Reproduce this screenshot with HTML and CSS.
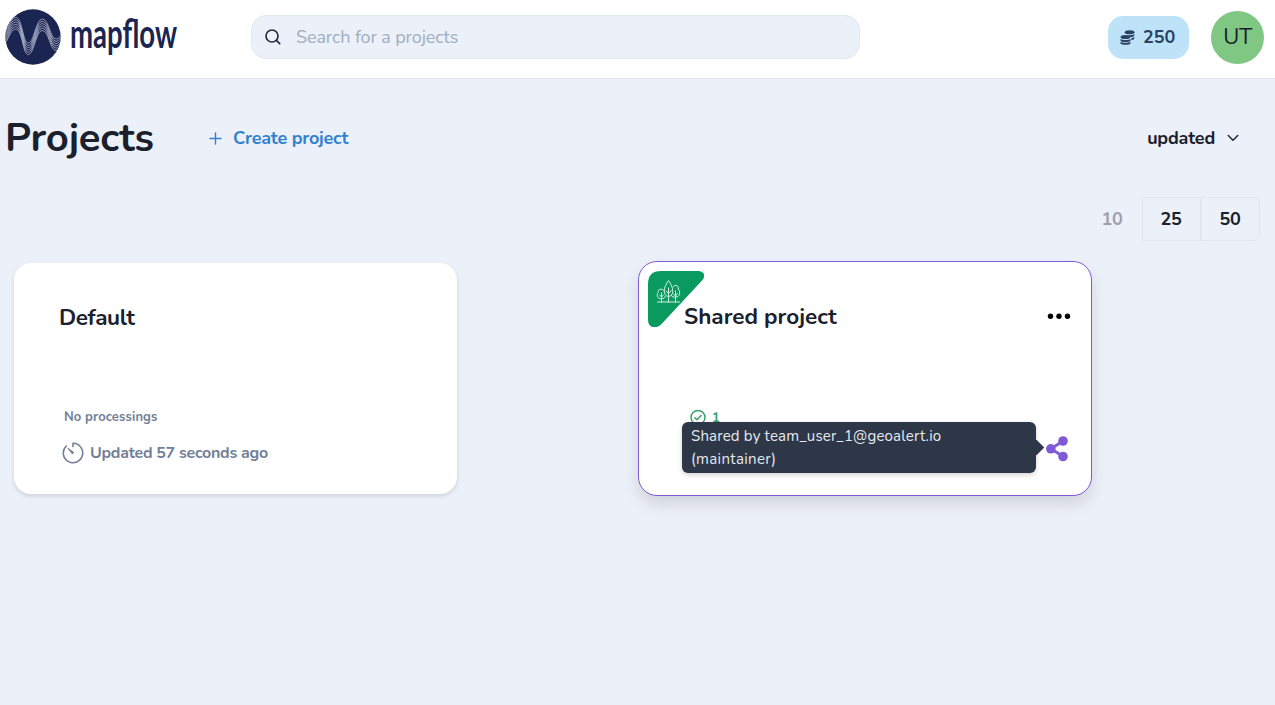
FILE: index.html
```html
<!DOCTYPE html>
<html lang="en">
<head>
<meta charset="utf-8">
<title>Mapflow – Projects</title>
<link rel="stylesheet" href="styles.css">
</head>
<body>
<header class="header">
  <a class="brand">
    <svg class="brand-mark" viewBox="0 0 56 56">
      <defs>
        <clipPath id="disc"><circle cx="28" cy="28" r="27.7"/></clipPath>
        <path id="wave" d="M-2 25C3 22 5 8.500 10.700 8.500C17.500 8.500 17.500 34 23.300 34C29 34 31 10 37.300 10C44 10 45 30 51 30C54 30 55.500 27 58 22"/>
      </defs>
      <circle cx="28" cy="28" r="27.7" fill="#1a2551"/>
      <g clip-path="url(#disc)" fill="none" stroke="#c5c9dc" stroke-width=".7">
        <use href="#wave" y="0"/><use href="#wave" y="2.300"/><use href="#wave" y="4.600"/><use href="#wave" y="6.900"/><use href="#wave" y="9.200"/><use href="#wave" y="11.500"/>
      </g>
    </svg>
    <svg class="brand-name" viewBox="0 0 110 56"><text x="0" y="38.500" textLength="107" lengthAdjust="spacingAndGlyphs">mapflow</text></svg>
  </a>
  <label class="search">
    <svg viewBox="0 0 18 18" fill="none" stroke="#252c3c" stroke-width="1.7" stroke-linecap="round"><circle cx="8" cy="8" r="6"/><path d="M12.6 12.6L15.700 15.700"/></svg>
    <span class="search-text">Search for a projects</span>
  </label>
  <div class="credits">
    <svg viewBox="0 0 15 15" fill="#2a4365"><ellipse cx="9.6" cy="2.3" rx="4.9" ry="2"/><path d="M9.8 5.1c2 0 3.7-.4 4.5-1.2v1.5c0 .8-1.2 1.5-3 1.8-.4-.9-2-1.6-3.8-1.8zM11.4 8.2c1.200-.2 2.200-.6 2.900-1.100v1.400c0 .8-1.200 1.500-2.900 1.800z"/><ellipse cx="5.500" cy="7.100" rx="5" ry="2"/><path d="M.5 8.900c2 1.400 8 1.400 10 0v1.700c0 2-10 2-10 0zM.5 11.700c2 1.400 8 1.400 10 0v1.500c0 2.200-10 2.200-10 0z"/></svg>
    <span class="credits-value">250</span>
  </div>
  <div class="avatar">UT</div>
</header>
<main class="page">
  <div class="toolbar">
    <h1 class="title">Projects</h1>
    <a class="create">
      <svg viewBox="0 0 14 14" stroke="#3182ce" stroke-width="1.5" stroke-linecap="round"><path d="M7 1v12M1 7h12"/></svg>
      <span class="create-text">Create project</span>
    </a>
    <div class="sort">
      <span class="sort-text">updated</span>
      <svg viewBox="0 0 12 8" fill="none" stroke="#252c3c" stroke-width="1.6" stroke-linecap="round" stroke-linejoin="round"><path d="M1.300 1.500L6 6.200L10.700 1.500"/></svg>
    </div>
  </div>
  <div class="sizes">
    <span class="size size-off">10</span><span class="size">25</span><span class="size size-last">50</span>
  </div>
  <div class="cards">
    <article class="card">
      <h2 class="name name-default">Default</h2>
      <p class="empty">No processings</p>
      <div class="updated">
        <svg viewBox="0 0 22 22" fill="none" stroke="#718096" stroke-width="1.600" stroke-linecap="round" stroke-linejoin="round"><path d="M11 4.600V1.300A9.700 9.700 0 1 1 4.300 4"/><path d="M6.300 6.500L11.800 10.500L10.600 11.700Z" fill="#718096" stroke-width="1"/></svg>
        <span class="updated-text">Updated 57 seconds ago</span>
      </div>
    </article>
    <article class="card card-shared">
      <svg class="ribbon" viewBox="0 0 56 56">
        <path d="M13 0H50C56 0 58 5 54.500 9L14 52.500C8 59 0 57 0 49V13Q0 0 13 0Z" fill="#089a5e"/>
        <g fill="none" stroke="#d5efe1" stroke-width="1" stroke-linecap="round"><path d="M9.500 31H31.500M20.500 31V17M20.500 25.500C14 25 15.500 16 20.500 9.500C25.500 16 27 25 20.500 25.500M17.800 20L20.500 22.500L23.200 19.500M13.500 31V22M11.500 24L13.500 26L15.300 24M27.500 31V20M25.500 23L27.500 25L29.500 22.500M15.500 19C11.500 16.500 9.500 19.500 10.300 21.500C7.500 24 10 28.500 13.500 27.500C15.500 28 17 27 17.300 25.200M25 16C27.500 12.500 31 15 30.300 18C33 21.500 31.500 26.500 27.500 26C25.500 26.500 24 26 23.400 24.500"/></g>
      </svg>
      <div class="card-head">
        <h2 class="name name-shared">Shared project</h2>
        <svg class="dots" viewBox="0 0 24 8"><circle cx="3.500" cy="3.200" r="2.700"/><circle cx="12" cy="3.200" r="2.700"/><circle cx="20.500" cy="3.200" r="2.700"/></svg>
      </div>
      <div class="done">
        <svg viewBox="0 0 16 16" fill="none" stroke="#38a169" stroke-width="1.500" stroke-linecap="round" stroke-linejoin="round"><circle cx="8" cy="7.500" r="7"/><path d="M4.800 7.900L7 9.800L11.200 5.500"/></svg>
        <span>1</span>
      </div>
      <svg class="share" viewBox="0 0 22 26" fill="#805ad5"><path d="M17 5L5 12.800L17 20.500" fill="none" stroke="#805ad5" stroke-width="2.800"/><circle cx="17" cy="5" r="4.800"/><circle cx="4.800" cy="12.800" r="4.800"/><circle cx="17" cy="20.500" r="4.800"/></svg>
      <div class="tooltip"><span class="tip-a">Shared by team_user_1@geoalert.io</span><br><span class="tip-b">(maintainer)</span></div>
    </article>
  </div>
</main>
</body>
</html>
```
FILE: styles.css
```css
* { box-sizing: border-box; }
body {
  margin: 0;
  height: 705px;
  overflow: hidden;
  background: #ecf0f8;
  color: #1a202c;
  font-family: Nunito, Lato, "Open Sans", sans-serif;
}
svg { display: block; flex: none; }
h1, h2, p { margin: 0; }
span, h1, h2, p { white-space: nowrap; }
.header {
  display: flex;
  align-items: flex-start;
  height: 79px;
  background: #fff;
  border-bottom: 1px solid #dfe4ec;
}
.brand { display: flex; width: 251px; padding: 9px 0 0 5px; gap: 9px; }
.brand-mark { width: 56px; height: 56px; }
.brand-name { width: 110px; height: 56px; overflow: visible; }
.brand-name text { font: 700 41px Lato, sans-serif; fill: #1a2551; }
.search {
  display: flex;
  align-items: center;
  gap: 14px;
  width: 609px;
  height: 44px;
  margin-top: 15px;
  padding-left: 12px;
  border: 1px solid #e2e8f0;
  border-radius: 15px;
  background: #ecf0f8;
  color: #a0aec0;
  font-size: 18px;
}
.search svg { width: 18px; height: 18px; }
.search-text { letter-spacing: -.12px; }
.credits {
  display: flex;
  align-items: center;
  gap: 8px;
  width: 81px;
  height: 43px;
  margin: 16px 22px 0 248px;
  padding: 0 0 1px 12px;
  border-radius: 15px;
  background: #bee3f8;
  color: #2a4365;
  font-size: 18px;
  font-weight: 700;
}
.credits svg { width: 15px; height: 15px; }
.avatar {
  width: 53px;
  height: 53px;
  margin-top: 11px;
  border-radius: 50%;
  background: #80c784;
  font-size: 22px;
  letter-spacing: -.5px;
  line-height: 53px;
  text-align: center;
}
.toolbar { display: flex; align-items: center; height: 118px; padding: 0 36px 0 5px; }
.title { width: 204px; font-size: 40px; line-height: 50px; font-weight: 700; letter-spacing: -.15px; }
.create { display: flex; align-items: center; gap: 11px; color: #3182ce; font-size: 18px; font-weight: 700; letter-spacing: -.22px; }
.create svg { width: 13px; height: 13px; }
.sort { display: flex; align-items: center; gap: 12px; margin-left: auto; font-size: 18px; font-weight: 700; letter-spacing: -.2px; }
.sort svg { width: 12px; height: 8px; }
.sizes { display: flex; justify-content: flex-end; padding-right: 15px; }
.size {
  width: 59px;
  height: 44px;
  padding-right: 1px;
  border: 1px solid #e2e8f0;
  font-size: 18px;
  font-weight: 700;
  line-height: 43px;
  letter-spacing: -.2px;
  text-align: center;
}
.size-off { color: #9ca1ad; border-color: transparent; }
.size-last { border-radius: 0 6px 6px 0; }
.cards { display: flex; align-items: flex-start; gap: 181px; padding: 20px 0 0 14px; }
.card {
  width: 443px;
  height: 231px;
  margin-top: 2px;
  padding: 41px 45px 0;
  border-radius: 17px;
  background: #fff;
  box-shadow: 0 2px 4px rgba(0, 0, 0, .13);
}
.name { font-size: 22.5px; line-height: 28px; font-weight: 700; }
.name-default { letter-spacing: -.4px; }
.empty { width: max-content; margin: 75px 0 0 5px; color: #718096; font-size: 13px; line-height: 20px; font-weight: 700; letter-spacing: .12px; }
.updated { display: flex; align-items: center; gap: 6px; margin: 15px 0 0 3px; color: #718096; font-size: 16px; font-weight: 700; letter-spacing: -.27px; }
.updated svg { width: 22px; height: 22px; }
.card-shared {
  position: relative;
  width: 454px;
  height: 235px;
  margin-top: 0;
  padding: 41px 20px 0 45px;
  border: 1px solid #805ad5;
  border-radius: 19px;
  box-shadow: 0 8px 15px rgba(0, 0, 0, .12);
}
.ribbon { position: absolute; left: 9px; top: 9px; width: 56px; height: 56px; }
.card-head { position: relative; display: flex; align-items: center; justify-content: space-between; }
.dots { width: 24px; height: 8px; }
.done { display: flex; align-items: center; gap: 6px; margin: 77px 0 0 6px; height: 20px; color: #38a169; font-size: 13px; font-weight: 700; }
.done svg { width: 16px; height: 16px; }
.share { width: 22px; height: 26px; margin: 8px 3px 0 auto; }
.tooltip {
  position: absolute;
  left: 43px;
  top: 160px;
  width: 354px;
  height: 51px;
  padding: 3px 9px;
  border-radius: 6px;
  background: #2d3748;
  color: #e6eaf0;
  font-size: 15px;
  line-height: 23px;
  letter-spacing: .18px;
  box-shadow: 0 2px 5px rgba(0, 0, 0, .18);
}
.tip-b { letter-spacing: .35px; }
.tooltip::after {
  content: "";
  position: absolute;
  left: 349px;
  top: 20px;
  width: 11px;
  height: 11px;
  background: #2d3748;
  transform: rotate(45deg);
}
```
